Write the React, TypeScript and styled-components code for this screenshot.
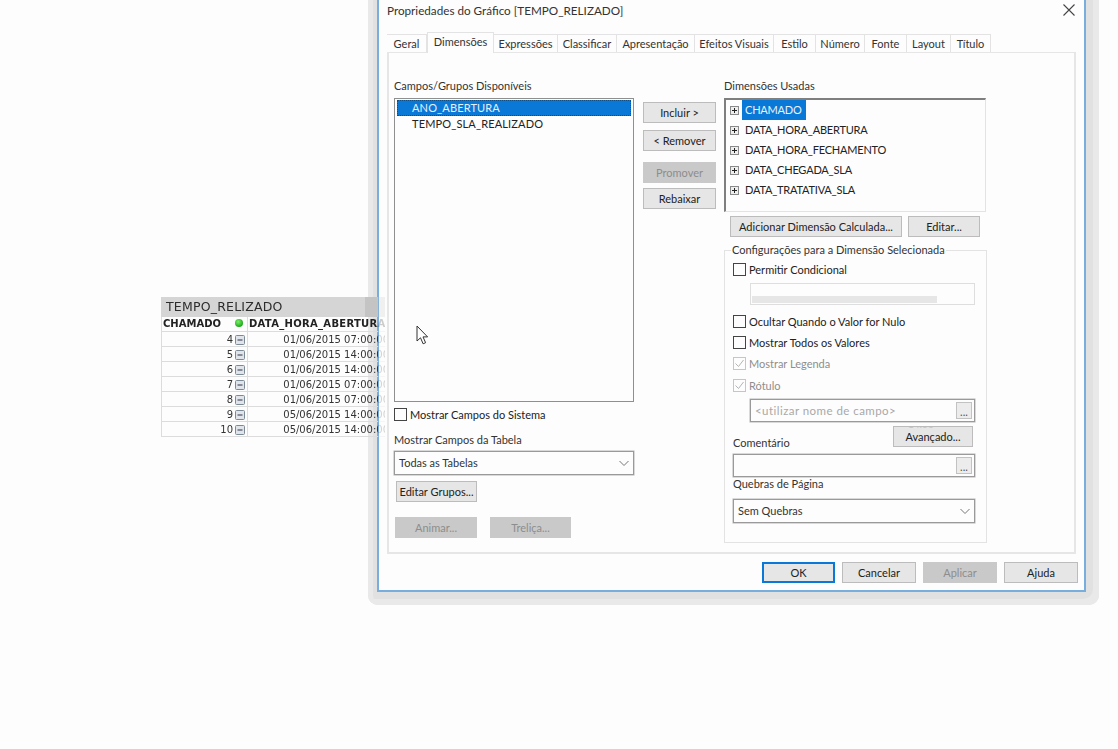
import React from "react";
import styled, { createGlobalStyle, css } from "styled-components";

const Global = createGlobalStyle`
  html, body { margin: 0; padding: 0; background: #fdfdfd; overflow: hidden; }
  #root { width: 1118px; height: 749px; position: relative; overflow: hidden; font-family: Lato, "Liberation Sans", Arial, sans-serif; }
  * { box-sizing: border-box; }
`;

/* ---------- background table ---------- */
const Sheet = styled.div`
  position: absolute;
  left: 161px;
  top: 297px;
  width: 224px;
  overflow: hidden;
  z-index: 3;
  font-family: "DejaVu Sans", Verdana, sans-serif;
  color: #333;
  -webkit-mask-image: linear-gradient(to right, #000 217px, rgba(0,0,0,.22) 217px);
  mask-image: linear-gradient(to right, #000 217px, rgba(0,0,0,.22) 217px);
`;
const SheetTitle = styled.div`
  height: 20px;
  line-height: 20px;
  padding-left: 5px;
  font-size: 12.5px;
  letter-spacing: 0.2px;
  color: #2c2c2c;
  white-space: nowrap;
  background: linear-gradient(to right, #d5d5d5 204px, #c4c4c4 204px);
`;
const SheetRow = styled.div`
  display: grid;
  grid-template-columns: 86px 141px;
  height: 15px;
  border-left: 1px solid #dcdcdc;
  border-bottom: 1px solid #dcdcdc;
  font-size: 10px;
  line-height: 15px;
  white-space: nowrap;
`;
const HeadCell = styled.div<{ $spaced?: boolean }>`
  position: relative;
  font-weight: 700;
  padding-left: 1px;
  line-height: 14px;
  letter-spacing: ${(p) => (p.$spaced ? "0.3px" : "0")};
  color: #222;
  border-right: 1px solid #dcdcdc;
`;
const KeyCell = styled.div`
  display: flex;
  justify-content: flex-end;
  align-items: center;
  gap: 2px;
  padding-right: 2px;
  border-right: 1px solid #dcdcdc;
`;
const DateCell = styled.div`
  text-align: right;
`;
const StatusDot = styled.span`
  position: absolute;
  right: 4px;
  top: 2px;
  width: 8px;
  height: 8px;
  border-radius: 50%;
  background: radial-gradient(circle at 40% 35%, #7dee6c, #16a512 75%);
`;

const MinusBox = () => (
  <svg width="10" height="10" viewBox="0 0 10 10">
    <rect x="0.5" y="0.5" width="9" height="9" rx="1" fill="#dfe5ea" stroke="#7c8a96" />
    <path d="M2.5 5h5" stroke="#334" strokeWidth="1" />
  </svg>
);

/* ---------- dialog window ---------- */
const WindowShadow = styled.div`
  position: absolute;
  left: 368px;
  top: -10px;
  width: 731px;
  height: 615px;
  padding: 10px 13px 13px 9px;
  background: #e1e1e1;
  border-radius: 0 0 10px 10px;
  box-shadow: inset -6px -6px 0 #e9e9e9, inset 5px 0 0 #e9e9e9;
  z-index: 2;
`;
const Dialog = styled.div`
  width: 709px;
  height: 592px;
  background: #fdfdfd;
  border: 2px solid #77aede;
  border-top: 0;
  padding: 0 7px 0 8px;
  color: #222;
  font-size: 11px;
`;
const TitleBar = styled.div`
  display: flex;
  align-items: center;
  justify-content: space-between;
  height: 20px;
  margin-bottom: 12px;
  padding: 0 2px 0 0;
  font-size: 11.7px;
  color: #333;
`;
const TabStrip = styled.div`
  display: flex;
  align-items: flex-end;
  height: 20px;
`;
const Tab = styled.div<{ $w: number; $active?: boolean }>`
  width: ${(p) => p.$w}px;
  height: 18px;
  display: flex;
  align-items: center;
  justify-content: center;
  white-space: nowrap;
  background: #fdfdfd;
  color: #333;
  border: 1px solid #e3e3e3;
  border-bottom: 0;
  border-left-width: 0;
  ${(p) =>
    p.$active &&
    css`
      height: 21px;
      margin-bottom: -1px;
      padding-bottom: 4px;
      border-width: 1px 1px 0 1px;
      position: relative;
      z-index: 1;
    `}
`;
const Panel = styled.div`
  display: flex;
  width: 689px;
  height: 502px;
  padding: 25px 0 0 5px;
  border: 2px solid #e6e6e6;
  border-top-width: 1px;
`;
const LeftColumn = styled.div`
  width: 240px;
  display: flex;
  flex-direction: column;
`;
const MiddleColumn = styled.div`
  width: 73px;
  margin-left: 9px;
  padding-top: 24px;
  display: flex;
  flex-direction: column;
`;
const RightColumn = styled.div`
  width: 263px;
  margin-left: 8px;
  display: flex;
  flex-direction: column;
`;
const Caption = styled.div<{ $mt?: number; $mb?: number }>`
  height: 16px;
  line-height: 16px;
  color: #333;
  white-space: nowrap;
  margin-top: ${(p) => p.$mt ?? 0}px;
  margin-bottom: ${(p) => p.$mb ?? 0}px;
`;
const ListBox = styled.div`
  height: 304px;
  padding: 1px;
  border: 1px solid #8f8f8f;
  box-shadow: inset 0 0 0 1px #fdfdfd;
`;
const ListRow = styled.div<{ $selected?: boolean }>`
  height: 16px;
  line-height: 16px;
  padding-left: 15px;
  margin: 0 1px;
  letter-spacing: 0.15px;
  color: ${(p) => (p.$selected ? "#e6f0fa" : "#222")};
  background: ${(p) => (p.$selected ? "#0a78d7" : "transparent")};
  outline: ${(p) => (p.$selected ? "1px dotted #0c4f88" : "none")};
  outline-offset: -1px;
`;
const CheckRow = styled.div<{ $mt?: number; $disabled?: boolean }>`
  display: flex;
  align-items: center;
  height: 14px;
  gap: 3px;
  margin-top: ${(p) => p.$mt ?? 0}px;
  color: ${(p) => (p.$disabled ? "#8e8e8e" : "#222")};
  white-space: nowrap;
`;
const CheckBox = styled.span<{ $disabled?: boolean }>`
  width: 13px;
  height: 13px;
  flex: none;
  display: flex;
  border: 1px solid ${(p) => (p.$disabled ? "#c6c6c6" : "#444")};
  background: #fdfdfd;
`;
const Check = ({ checked, disabled }: { checked?: boolean; disabled?: boolean }) => (
  <CheckBox $disabled={disabled}>
    {checked && (
      <svg width="11" height="11" viewBox="0 0 11 11">
        <path d="M1.5 5.5l3 3 5-6.5" fill="none" stroke="#b4b4b4" strokeWidth="1" />
      </svg>
    )}
  </CheckBox>
);
const Field = styled.div<{ $w: number; $h: number; $mt?: number; $ml?: number; $disabled?: boolean }>`
  position: relative;
  flex: none;
  width: ${(p) => p.$w}px;
  height: ${(p) => p.$h}px;
  margin-top: ${(p) => p.$mt ?? 0}px;
  margin-left: ${(p) => p.$ml ?? 0}px;
  display: flex;
  align-items: center;
  justify-content: space-between;
  padding: 0 2px 1px 4px;
  border: 1px solid ${(p) => (p.$disabled ? "#dedede" : "#9a9a9a")};
  box-shadow: ${(p) => (p.$disabled ? "none" : "0 0 0 0.5px #b5b5b5")};
  color: #333;
  background: #fdfdfd;
`;
const Smear = styled.span`
  position: absolute;
  left: 1px;
  bottom: 1px;
  width: 185px;
  height: 7px;
  background: #e6e6e6;
`;
const FieldHint = styled.span`
  color: #a8a8a8;
  font-size: 11.5px;
  letter-spacing: 0.45px;
`;
const DotsButton = styled.span`
  width: 16px;
  height: 17px;
  flex: none;
  display: flex;
  align-items: flex-end;
  justify-content: center;
  line-height: 13px;
  background: #ececec;
  border: 1px solid #c2c2c2;
  font-size: 11px;
  color: #555;
`;
const Chevron = () => (
  <svg width="14" height="14" viewBox="0 0 14 14">
    <path d="M2.5 5l4.5 4.5L11.5 5" fill="none" stroke="#777" strokeWidth="1" />
  </svg>
);
const Button = styled.div<{ $w?: number; $mt?: number; $ml?: number; $disabled?: boolean; $default?: boolean }>`
  position: relative;
  flex: none;
  width: ${(p) => (p.$w ? `${p.$w}px` : "100%")};
  height: 21px;
  margin-top: ${(p) => p.$mt ?? 0}px;
  margin-left: ${(p) => p.$ml ?? 0}px;
  display: flex;
  align-items: center;
  justify-content: center;
  white-space: nowrap;
  overflow: hidden;
  color: ${(p) => (p.$disabled ? "#8d8d8d" : "#222")};
  background: ${(p) => (p.$disabled ? "#c9c9c9" : "#e6e6e6")};
  border: ${(p) =>
    p.$default ? "2px solid #0a78d7" : `1px solid ${p.$disabled ? "#c9c9c9" : "#bcbcbc"}`};
`;
const Ghost = styled.span`
  position: absolute;
  top: -9px;
  left: 14px;
  color: #c4c4c4;
  font-size: 10px;
`;
const InlineRow = styled.div<{ $mt?: number; $ml?: number }>`
  display: flex;
  gap: 6px;
  margin-top: ${(p) => p.$mt ?? 0}px;
  margin-left: ${(p) => p.$ml ?? 0}px;
`;
const Tree = styled.div`
  width: 262px;
  height: 114px;
  padding: 0 0 0 4px;
  border-style: solid;
  border-width: 2px 1px 1px 2px;
  border-color: #7f7f7f #e3e3e3 #e3e3e3 #7f7f7f;
`;
const TreeRow = styled.div`
  display: flex;
  align-items: center;
  height: 20px;
`;
const TreeLabel = styled.span<{ $selected?: boolean }>`
  height: 20px;
  line-height: 20px;
  margin-left: 3px;
  padding: 0 3px;
  min-width: ${(p) => (p.$selected ? "64px" : "0")};
  color: ${(p) => (p.$selected ? "#e8f2fb" : "#222")};
  background: ${(p) => (p.$selected ? "#0a78d7" : "transparent")};
  letter-spacing: -0.2px;
`;
const PlusBox = () => (
  <svg width="9" height="9" viewBox="0 0 9 9" style={{ flex: "none" }}>
    <rect x="0.5" y="0.5" width="8" height="8" fill="#eeeeee" stroke="#8a8a8a" />
    <path d="M2 4.5h5M4.5 2v5" stroke="#222" strokeWidth="1" />
  </svg>
);
const GroupBox = styled.fieldset`
  margin: 5px 0 0;
  padding: 0 0 0 8px;
  width: 263px;
  height: 301px;
  min-width: 0;
  border: 1px solid #e3e3e3;
  display: flex;
  flex-direction: column;
`;
const GroupLegend = styled.legend`
  height: 16px;
  line-height: 16px;
  margin-left: -2px;
  padding: 0 1px;
  color: #333;
`;
const GroupBody = styled.div`
  display: flex;
  flex-direction: column;
  padding-top: 4px;
`;
const CommentRow = styled.div`
  display: flex;
  justify-content: space-between;
  width: 240px;
  height: 24px;
  margin-top: 4px;
`;
const CommentCaption = styled.div`
  align-self: flex-end;
  line-height: 16px;
  margin-bottom: -1px;
  color: #333;
`;
const Footer = styled.div`
  display: flex;
  justify-content: flex-end;
  gap: 7px;
  margin: 8px -1px 0 0;
`;
const Pointer = styled.svg`
  position: absolute;
  left: 416px;
  top: 325px;
  z-index: 4;
`;

const tabs: [string, number][] = [
  ["Geral", 40], ["Dimensões", 67], ["Expressões", 64], ["Classificar", 59],
  ["Apresentação", 78], ["Efeitos Visuais", 79], ["Estilo", 42], ["Número", 49],
  ["Fonte", 42], ["Layout", 44], ["Título", 40],
];
const rows: [number, string][] = [
  [4, "01/06/2015 07:00:00"], [5, "01/06/2015 14:00:00"], [6, "01/06/2015 14:00:00"],
  [7, "01/06/2015 07:00:00"], [8, "01/06/2015 07:00:00"], [9, "05/06/2015 14:00:00"],
  [10, "05/06/2015 14:00:00"],
];
const dims = ["CHAMADO", "DATA_HORA_ABERTURA", "DATA_HORA_FECHAMENTO", "DATA_CHEGADA_SLA", "DATA_TRATATIVA_SLA"];

export default function App() {
  return (
    <>
      <Global />
      <Sheet>
        <SheetTitle>TEMPO_RELIZADO</SheetTitle>
        <SheetRow>
          <HeadCell>CHAMADO<StatusDot /></HeadCell>
          <HeadCell $spaced>DATA_HORA_ABERTURA</HeadCell>
        </SheetRow>
        {rows.map(([n, d]) => (
          <SheetRow key={n}>
            <KeyCell>{n}<MinusBox /></KeyCell>
            <DateCell>{d}</DateCell>
          </SheetRow>
        ))}
      </Sheet>

      <WindowShadow>
        <Dialog>
          <TitleBar>
            <span>Propriedades do Gráfico [TEMPO_RELIZADO]</span>
            <svg width="12" height="12" viewBox="0 0 12 12">
              <path d="M.5.5l11 11M11.5.5l-11 11" stroke="#444" strokeWidth="1.1" />
            </svg>
          </TitleBar>
          <TabStrip>
            {tabs.map(([t, w]) => (
              <Tab key={t} $w={w} $active={t === "Dimensões"}>{t}</Tab>
            ))}
          </TabStrip>
          <Panel>
            <LeftColumn>
              <Caption $mb={4}>Campos/Grupos Disponíveis</Caption>
              <ListBox>
                <ListRow $selected>ANO_ABERTURA</ListRow>
                <ListRow>TEMPO_SLA_REALIZADO</ListRow>
              </ListBox>
              <CheckRow $mt={5}><Check />Mostrar Campos do Sistema</CheckRow>
              <Caption $mt={11}>Mostrar Campos da Tabela</Caption>
              <Field $w={240} $h={24} $mt={3}>Todas as Tabelas<Chevron /></Field>
              <Button $w={81} $mt={6} $ml={2}>Editar Grupos...</Button>
              <InlineRow $mt={15} $ml={1}>
                <Button $w={82} $disabled>Animar...</Button>
                <Button $w={81} $ml={7} $disabled>Treliça...</Button>
              </InlineRow>
            </LeftColumn>

            <MiddleColumn>
              <Button>Incluir &gt;</Button>
              <Button $mt={7}>&lt; Remover</Button>
              <Button $mt={11} $disabled>Promover</Button>
              <Button $mt={5}>Rebaixar</Button>
            </MiddleColumn>

            <RightColumn>
              <Caption $mb={4}>Dimensões Usadas</Caption>
              <Tree>
                {dims.map((d, i) => (
                  <TreeRow key={d}>
                    <PlusBox />
                    <TreeLabel $selected={i === 0}>{d}</TreeLabel>
                  </TreeRow>
                ))}
              </Tree>
              <InlineRow $mt={4} $ml={6}>
                <Button $w={172}>Adicionar Dimensão Calculada...</Button>
                <Button $w={72}>Editar...</Button>
              </InlineRow>
              <GroupBox>
                <GroupLegend>Configurações para a Dimensão Selecionada</GroupLegend>
                <GroupBody>
                  <CheckRow><Check />Permitir Condicional</CheckRow>
                  <Field $w={225} $h={22} $mt={7} $ml={17} $disabled><Smear /></Field>
                  <CheckRow $mt={9}><Check />Ocultar Quando o Valor for Nulo</CheckRow>
                  <CheckRow $mt={7}><Check />Mostrar Todos os Valores</CheckRow>
                  <CheckRow $mt={7} $disabled><Check checked disabled />Mostrar Legenda</CheckRow>
                  <CheckRow $mt={8} $disabled><Check checked disabled />Rótulo</CheckRow>
                  <Field $w={225} $h={23} $mt={7} $ml={17}>
                    <FieldHint>&lt;utilizar nome de campo&gt;</FieldHint>
                    <DotsButton>...</DotsButton>
                  </Field>
                  <CommentRow>
                    <CommentCaption>Comentário</CommentCaption>
                    <Button $w={80}><Ghost>14:00</Ghost>Avançado...</Button>
                  </CommentRow>
                  <Field $w={242} $h={23} $mt={4}>
                    <span />
                    <DotsButton>...</DotsButton>
                  </Field>
                  <Caption $mt={-1}>Quebras de Página</Caption>
                  <Field $w={242} $h={24} $mt={7}>Sem Quebras<Chevron /></Field>
                </GroupBody>
              </GroupBox>
            </RightColumn>
          </Panel>
          <Footer>
            <Button $w={73} $default>OK</Button>
            <Button $w={74}>Cancelar</Button>
            <Button $w={74} $disabled>Aplicar</Button>
            <Button $w={74}>Ajuda</Button>
          </Footer>
        </Dialog>
      </WindowShadow>

      <Pointer width="13" height="21" viewBox="0 0 13 21">
        <path d="M1 1v15l3.5-3.2 2.6 6 2.5-1.1-2.6-5.8h4.6z" fill="#fff" stroke="#333" strokeWidth="1" strokeLinejoin="round" />
      </Pointer>
    </>
  );
}
